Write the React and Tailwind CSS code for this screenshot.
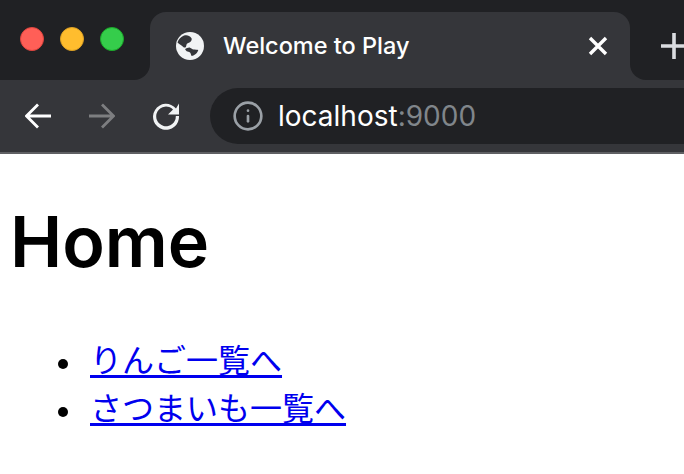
import { Info } from "lucide-react";

const latin = "font-['Inter','Liberation_Sans',sans-serif]";

function Globe() {
  return (
    <svg viewBox="0 0 28 28" className="h-7 w-7 shrink-0">
      <circle cx="14" cy="14" r="14" fill="#f1f3f4" />
      <path
        d="M1.500 10.500C2.500 7.500 4.500 5 7.500 3.800c2-.6 4-.6 5.500.2 1.800 1 3 2.200 2.700 3.500-.3 1.800-1.700 3-3.500 3.500-1.500.4-1.700 1.500-2 3-.3 1.500-1.200 2-2.700 1.200-1-.8-1.700-1.700-3.500-2.700-1-.6-1.800-1.300-2.500-2zM9 17.300c1.500-1 3.500-2 5-1.600 1.500.4 2.200 1.600 3.500 1.800 1.700.2 3.500 0 4.800.5-.7 2-1.800 3.500-3.300 4.500-1 .7-2.200 1.300-3.300 1.500-.8-1-.8-2.500-1.700-3.500-1-.8-2.300-.8-3.300-1.300-.7-.5-1.200-1.300-1.700-2.400z"
        fill="#35363a"
      />
    </svg>
  );
}

export default function App() {
  return (
    <div className="h-[474px] w-[684px] overflow-hidden bg-white font-['Liberation_Sans','Noto_Sans_CJK_JP',sans-serif]">
      {/* tab strip */}
      <div className="flex h-20 bg-[#35363a]">
        <div className="flex w-[150px] shrink-0 items-start gap-4 rounded-br-2xl bg-[#202124] pl-5 pt-[27px]">
          <span className="h-6 w-6 rounded-full border border-[#e0443e] bg-[#ff5f57]" />
          <span className="h-6 w-6 rounded-full border border-[#dea123] bg-[#ffbd2e]" />
          <span className="h-6 w-6 rounded-full border border-[#1aab29] bg-[#35cd4b]" />
        </div>
        <div className="w-[480px] shrink-0 bg-[#202124] pt-3">
          <div className="flex h-[68px] items-center rounded-t-2xl bg-[#35363a] pl-[26px] pr-[20px]">
            <Globe />
            <span className={`ml-[19px] text-[23.5px] font-[450] text-white ${latin}`}>Welcome to Play</span>
            <svg viewBox="0 0 24 24" className="ml-auto h-6 w-6 text-white" fill="none" stroke="currentColor" strokeWidth="3.4">
              <path d="M4 4l16 16M20 4L4 20" />
            </svg>
          </div>
        </div>
        <div className="flex flex-1 items-start rounded-bl-2xl bg-[#202124] pl-[31px] pt-[33px]">
          <svg viewBox="0 0 26 26" className="h-[26px] w-[26px] shrink-0 text-[#dadce0]" fill="none" stroke="currentColor" strokeWidth="3.6">
            <path d="M13 0v26M0 13h26" />
          </svg>
        </div>
      </div>
      {/* toolbar */}
      <div className="flex h-[74px] items-start border-b-2 border-[#5f6063] bg-[#35363a] pl-[25px] pt-2">
        <div className="flex h-14 items-center">
          <svg viewBox="0 0 26 26" className="h-[26px] w-[26px] text-white" fill="none" stroke="currentColor" strokeWidth="2.8">
            <path d="M26 13H2M13 1.500L1.500 13 13 24.500" />
          </svg>
          <svg viewBox="0 0 26 26" className="ml-[38px] h-[26px] w-[26px] text-[#7d7e80]" fill="none" stroke="currentColor" strokeWidth="2.8">
            <path d="M0 13h24M13 1.500L24.500 13 13 24.500" />
          </svg>
          <svg viewBox="0 0 28 28" className="ml-[37px] h-7 w-7 text-[#f1f3f4]">
            <path d="M24 6.500A13 13 0 1 0 27 14h-3.200A9.800 9.800 0 1 1 21 7.500L16 12.500h11V1.500z" fill="currentColor" />
          </svg>
        </div>
        <div className="ml-[30px] flex h-14 flex-1 items-center rounded-l-[28px] bg-[#202124] pl-[22px]">
          <Info className="h-8 w-8 text-[#9aa0a6]" strokeWidth={2} />
          <span className={`ml-[14px] text-[28px] font-normal text-white ${latin}`}>
            localhost<span className="text-[#80868b]">:9000</span>
          </span>
        </div>
      </div>
      {/* page */}
      <div className="px-2.5">
        <h1 className={`mt-[48px] text-[70px] leading-[80px] font-semibold text-black ${latin}`}>Home</h1>
        <ul className="mt-[55px] pl-12 text-[32px] leading-[48px]">
          <li className="flex items-center">
            <span className="mt-1.5 h-2.5 w-2.5 rounded-full bg-black" />
            <a href="#" className="ml-[22px] text-[#0000ee] underline decoration-[3px] underline-offset-[3px]">りんご一覧へ</a>
          </li>
          <li className="flex items-center">
            <span className="mt-1.5 h-2.5 w-2.5 rounded-full bg-black" />
            <a href="#" className="ml-[22px] text-[#0000ee] underline decoration-[3px] underline-offset-[3px]">さつまいも一覧へ</a>
          </li>
        </ul>
      </div>
    </div>
  );
}
